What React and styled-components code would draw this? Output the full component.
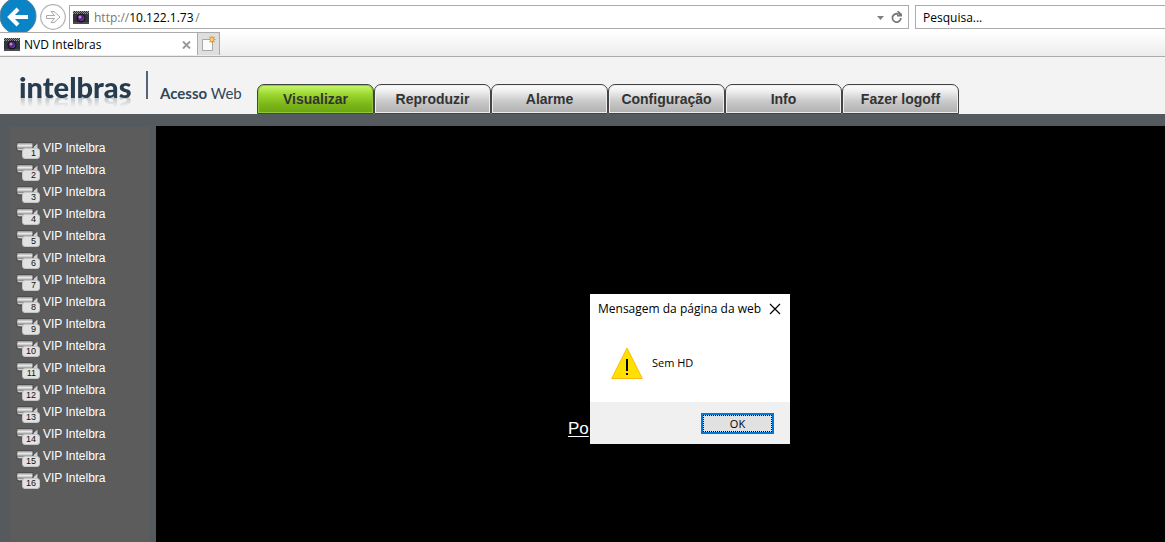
import React from "react";
import styled, { createGlobalStyle } from "styled-components";

const GlobalStyle = createGlobalStyle`
  * { box-sizing: border-box; }
  body { margin: 0; background: #555a5f; }
  button, input { font: inherit; color: inherit; margin: 0; padding: 0; border: 0; background: none; }
  svg { display: block; }
`;

const Screen = styled.div`
  position: relative;
  display: flex;
  flex-direction: column;
  min-height: 100vh;
  overflow: hidden;
  font-family: "Liberation Sans", Arial, sans-serif;
`;

/* Browser chrome */
const Chrome = styled.header`
  font-family: "Open Sans", "Segoe UI", sans-serif;
  font-size: 12px;
  line-height: 16px;
  color: #000;
  background: #fff;
`;

const NavRow = styled.div`
  display: flex;
  align-items: flex-start;
  height: 32px;
  overflow: hidden;
`;

const NavButton = styled.button`
  flex: none;
  width: ${(p) => p.$width}px;
  height: 32px;
`;

const Field = styled.form`
  display: flex;
  align-items: center;
  height: 24px;
  margin-top: 5px;
  padding-top: 1px;
  border: 1px solid #ababab;
  background: #fff;
`;

const AddressField = styled(Field)`
  flex: 1;
  padding-left: 3px;
  padding-right: 5px;
  color: #777;
`;

const Scheme = styled.label`
  margin-left: 5px;
`;

const HostInput = styled.input`
  width: ${(p) => p.$width}px;
  color: #000;
  outline: none;
`;

const FieldTools = styled.div`
  display: flex;
  align-items: center;
  gap: 7px;
  margin-left: auto;
`;

const SearchField = styled(Field)`
  width: 256px;
  margin-left: 6px;
  margin-right: -6px;
  padding-left: 7px;
`;

const SearchInput = styled.input`
  width: 100%;
  outline: none;
  &::placeholder { color: #000; opacity: 1; }
`;

const TabRow = styled.div`
  display: flex;
  height: 25px;
  padding-bottom: 1px;
  background: linear-gradient(#fff, #ececec);
  border-bottom: 1px solid #ababab;
`;

const BrowserTab = styled.div`
  display: flex;
  align-items: center;
  width: 197px;
  padding: 1px 6px 0 4px;
  gap: 4px;
  background: #fff;
  border-top: 1px solid #ababab;
`;

const TabClose = styled.button`
  margin-left: auto;
`;

const NewTab = styled.button`
  display: flex;
  align-items: center;
  justify-content: center;
  width: 23px;
  background: #dedede;
  border: 1px solid #ababab;
  border-bottom: 0;
`;

/* Application */
const Masthead = styled.div`
  display: flex;
  align-items: flex-end;
  height: 57px;
  padding-left: 19px;
  background: #f3f3f3;
`;

const Brand = styled.div`
  display: flex;
  align-items: flex-start;
  width: 238px;
  height: 43px;
  color: #273c4e;
  font-family: Lato, sans-serif;
`;

const Wordmark = styled.div`
  width: 127px;
  font-family: Lato, sans-serif;
  font-size: 29px;
  line-height: 32px;
  font-weight: 900;
  -webkit-box-reflect: below -12px linear-gradient(transparent 50%, rgba(0, 0, 0, 0.3) 85%);
`;

const Divider = styled.div`
  width: 2px;
  height: 28px;
  background: #566575;
`;

const Product = styled.div`
  padding: 12px 0 0 12px;
  font-size: 15px;
  line-height: 20px;
  color: #30475a;
`;

const Menu = styled.nav`
  display: flex;
`;

const MenuTab = styled.button`
  width: 117px;
  height: 30px;
  border: 1px solid #444;
  border-radius: 7px 7px 0 0;
  font-size: 14px;
  font-weight: bold;
  line-height: 16px;
  color: #333;
  background: ${(p) =>
    p.$active
      ? "linear-gradient(#c8fa70, #9bd62d 35%, #7bb51a 70%, #6ba411)"
      : "linear-gradient(#fff, #f0f0f0 20%, #c8c8c8 60%, #b0b0b0)"};
  box-shadow: inset 0 0 0 1px ${(p) => (p.$active ? "#8fc83c" : "#ededed")};
`;

const Workspace = styled.div`
  display: flex;
  flex: 1;
  padding-top: 12px;
  background: #555a5f;
`;

const Sidebar = styled.aside`
  width: 140px;
  margin: 1px 6px 0 10px;
  padding: 10px 0 0 6px;
  background: #5c5c5c;
`;

const CameraList = styled.ul`
  margin: 0;
  padding: 0;
  list-style: none;
`;

const CameraButton = styled.button`
  display: flex;
  align-items: center;
  width: 100%;
  height: 22px;
  gap: 3px;
  font-size: 12px;
  line-height: 14px;
  color: #fff;
`;

const CameraIcon = styled.span`
  position: relative;
  width: 24px;
  height: 12px;
`;

const Channel = styled.span`
  position: absolute;
  right: 0;
  bottom: -5px;
  width: 18px;
  height: 11px;
  padding-right: 3px;
  border: 1px solid #c4c4c4;
  border-radius: 3px;
  background: #e2e2e2;
  color: #111;
  font-size: 9px;
  line-height: 8px;
  text-align: right;
`;

const Video = styled.main`
  flex: 1;
  padding: 293px 0 0 412px;
  background: #000;
`;

const PluginLink = styled.a`
  font-size: 17px;
  line-height: 20px;
  color: #fff;
  text-underline-offset: 2px;
`;

/* Message window */
const Dialog = styled.section`
  position: absolute;
  left: 590px;
  top: 294px;
  width: 200px;
  background: #fff;
  color: #000;
  font-family: "Open Sans", "Segoe UI", sans-serif;
  font-size: 12px;
  line-height: 16px;
`;

const DialogTitle = styled.div`
  display: flex;
  align-items: center;
  justify-content: space-between;
  height: 29px;
  padding: 0 9px 0 8px;
`;

const DialogBody = styled.div`
  display: flex;
  align-items: center;
  gap: 9px;
  height: 79px;
  padding: 0 21px 0 21px;
  font-size: 11px;
`;

const DialogFooter = styled.div`
  display: flex;
  align-items: center;
  justify-content: flex-end;
  height: 42px;
  padding: 0 16px;
  background: #f0f0f0;
`;

const OkButton = styled.button`
  width: 73px;
  height: 21px;
  border: 2px solid #0078d7;
  background: #e1e1e1;
  font-size: 11px;
  line-height: 15px;
  outline: 1px dotted #000;
  outline-offset: -3px;
`;

const Favicon = () => (
  <svg width="16" height="13" viewBox="0 0 16 13" aria-hidden="true">
    <rect width="16" height="13" fill="#33343a" />
    <path d="M0 .5h16M0 2.500h16" stroke="#9a9c9f" strokeDasharray="1 1" />
    <path d="M1 1.500h15" stroke="#7c7e82" strokeDasharray="1 1" />
    <rect y="11" width="16" height="2" fill="#4b4b50" />
    <circle cx="8" cy="7" r="4.5" fill="#17131f" />
    <circle cx="8" cy="7" r="3.2" fill="#54267a" />
    <circle cx="7" cy="6" r="1.5" fill="#c87fe0" />
    <path d="M8 9.500a3 3 0 0 0 3-3" stroke="#3658a0" fill="none" />
  </svg>
);

const BackIcon = () => (
  <svg width="37" height="32" viewBox="0 0 37 32" aria-hidden="true">
    <circle cx="18" cy="16" r="18" fill="#0b84c6" stroke="#4c7c99" strokeWidth="1" />
    <path d="M28 17H10M18 9l-8 8 8 8" fill="none" stroke="#fff" strokeWidth="4" />
  </svg>
);

const ForwardIcon = () => (
  <svg width="32" height="32" viewBox="0 0 32 32" aria-hidden="true">
    <circle cx="16" cy="17" r="12.300" fill="#fff" stroke="#b3b3b3" strokeWidth="1.200" />
    <path d="M9.500 15.500h8l-3.500-4h3l6 5.500-6 5.500h-3l3.500-4h-8z" fill="#fff" stroke="#aaa" />
  </svg>
);

const ChevronIcon = () => (
  <svg width="7" height="4" viewBox="0 0 7 4" aria-hidden="true">
    <path d="M0 0h7L3.500 4z" fill="#808080" />
  </svg>
);

const ReloadIcon = () => (
  <svg width="12" height="13" viewBox="0 0 12 13" aria-hidden="true">
    <path d="M9.800 7A4.200 4.200 0 1 1 7.500 3.200" fill="none" stroke="#777" strokeWidth="1.800" />
    <path d="M6 0h1.500L11 3v2.500H6V4h2z" fill="#777" />
  </svg>
);

const SmallCross = () => (
  <svg width="9" height="8" viewBox="0 0 9 8" aria-hidden="true">
    <path d="M1 .5l7 7M8 .5l-7 7" stroke="#999" strokeWidth="1.900" />
  </svg>
);

const NewTabIcon = () => (
  <svg width="15" height="16" viewBox="0 0 15 16" aria-hidden="true">
    <path d="M1.500 3.500h10v11h-10z" fill="#fafafa" stroke="#a7a7a7" />
    <path d="M11 0v7M7.500 3.500h7M8.500 1l5 5M13.500 1l-5 5" stroke="#e8941a" strokeWidth="1.200" />
    <circle cx="11" cy="3.500" r="1.500" fill="#ffd86a" />
  </svg>
);

const CameraShape = () => (
  <svg width="24" height="12" viewBox="0 0 24 12" aria-hidden="true">
    <defs>
      <linearGradient id="camera" x2="0" y2="1">
        <stop offset="0" stopColor="#808080" />
        <stop offset=".35" stopColor="#eee" />
        <stop offset=".6" stopColor="#999" />
        <stop offset="1" stopColor="#666" />
      </linearGradient>
    </defs>
    <path d="M1 .5h16v9H3.500l-3-1.500z" fill="url(#camera)" stroke="#4c4c4c" />
    <path d="M2 7.500h5" stroke="#d0d0d0" />
    <path d="M17 5l5-4.500v9h-5z" fill="#d0d0d0" stroke="#4c4c4c" />
  </svg>
);

const WarningIcon = () => (
  <svg width="32" height="32" viewBox="0 0 32 32" aria-hidden="true">
    <path d="M16 1L31.300 31.500H.7z" fill="#ffe000" stroke="#fbb915" />
    <path d="M16 12v12M16 26v2" stroke="#000" strokeWidth="2" />
  </svg>
);

const CloseIcon = () => (
  <svg width="12" height="12" viewBox="0 0 12 12" aria-hidden="true">
    <path d="M1 1l10 10M11 1L1 11" stroke="#000" strokeWidth="1.200" />
  </svg>
);

const menu = ["Visualizar", "Reproduzir", "Alarme", "Configuração", "Info", "Fazer logoff"];
const cameras = Array.from({ length: 16 }, (_, i) => i + 1);

export default function App() {
  return (
    <Screen>
      <GlobalStyle />
      <Chrome>
        <NavRow>
          <NavButton $width={37} aria-label="Voltar"><BackIcon /></NavButton>
          <NavButton $width={32} aria-label="Avançar"><ForwardIcon /></NavButton>
          <AddressField>
            <Favicon />
            <Scheme htmlFor="address">http://</Scheme>
            <HostInput id="address" $width={66} defaultValue="10.122.1.73" />
            <span>/</span>
            <FieldTools>
              <button type="button" aria-label="Histórico"><ChevronIcon /></button>
              <button type="button" aria-label="Atualizar"><ReloadIcon /></button>
            </FieldTools>
          </AddressField>
          <SearchField>
            <SearchInput aria-label="Pesquisa" placeholder="Pesquisa..." />
          </SearchField>
        </NavRow>
        <TabRow>
          <BrowserTab>
            <Favicon />
            <span>NVD Intelbras</span>
            <TabClose aria-label="Fechar guia"><SmallCross /></TabClose>
          </BrowserTab>
          <NewTab aria-label="Nova guia"><NewTabIcon /></NewTab>
        </TabRow>
      </Chrome>

      <Masthead>
        <Brand>
          <Wordmark>intelbras</Wordmark>
          <Divider />
          <Product><b>Acesso</b> Web</Product>
        </Brand>
        <Menu>
          {menu.map((label, i) => (
            <MenuTab key={label} $active={i === 0}>{label}</MenuTab>
          ))}
        </Menu>
      </Masthead>

      <Workspace>
        <Sidebar>
          <CameraList>
            {cameras.map((n) => (
              <li key={n}>
                <CameraButton>
                  <CameraIcon>
                    <CameraShape />
                    <Channel>{n}</Channel>
                  </CameraIcon>
                  VIP Intelbra
                </CameraButton>
              </li>
            ))}
          </CameraList>
        </Sidebar>
        <Video>
          <PluginLink href="#plugin">Po</PluginLink>
        </Video>
      </Workspace>

      <Dialog role="dialog" aria-labelledby="dialog-title">
        <DialogTitle>
          <span id="dialog-title">Mensagem da página da web</span>
          <button aria-label="Fechar"><CloseIcon /></button>
        </DialogTitle>
        <DialogBody>
          <WarningIcon />
          <span>Sem HD</span>
        </DialogBody>
        <DialogFooter>
          <OkButton>OK</OkButton>
        </DialogFooter>
      </Dialog>
    </Screen>
  );
}
